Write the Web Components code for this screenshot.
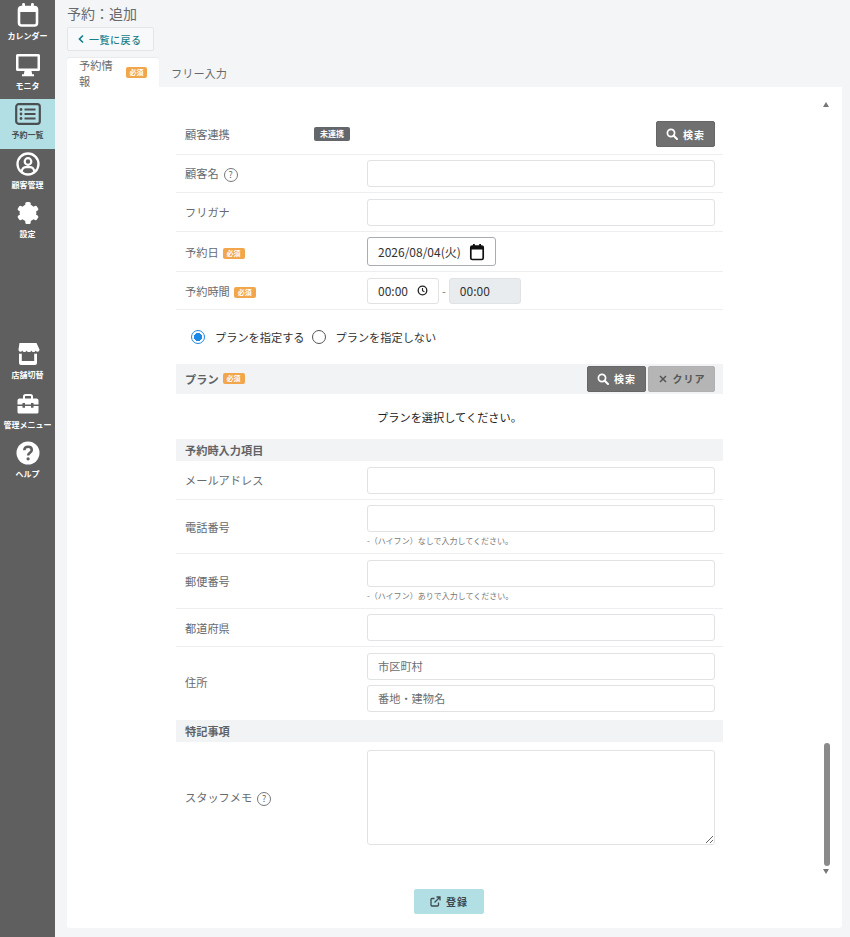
<!DOCTYPE html>
<html lang="ja">
<head>
<meta charset="utf-8">
<title>予約：追加</title>
<style>
    html, body {
        margin: 0;
        height: 937px;
        overflow: hidden;
        background: #f4f5f7;
        font-family: "Noto Sans CJK JP", "Noto Sans", sans-serif;
    }
</style>
</head>
<body>
<booking-app></booking-app>

<script>
const FONT = `"Noto Sans CJK JP", "Noto Sans", sans-serif`;
const INK = '#666a6e';

const ICONS = {
    calendar: `<svg width="24" height="26" viewBox="0 0 24 26"><rect x="3" y="5" width="18" height="18.5" rx="2.5" fill="none" stroke="currentColor" stroke-width="2.6"/><rect x="3" y="5" width="18" height="5" fill="currentColor"/><rect x="6.2" y="1" width="2.8" height="6" rx="1.2" fill="currentColor"/><rect x="15" y="1" width="2.8" height="6" rx="1.2" fill="currentColor"/></svg>`,
    monitor: `<svg width="26" height="24" viewBox="0 0 26 24"><path fill="currentColor" fill-rule="evenodd" d="M2.5 1h21A1.5 1.5 0 0 1 25 2.500v14a1.500 1.500 0 0 1-1.500 1.500h-21A1.500 1.500 0 0 1 1 16.500v-14A1.500 1.500 0 0 1 2.500 1zM3.500 3.500v12h19v-12z"/><path fill="currentColor" d="M9.500 18h7l.7 3.200H19v2H7v-2h1.800z"/></svg>`,
    list: `<svg width="26" height="24" viewBox="0 0 26 24"><rect x="1.200" y="2.200" width="23.600" height="19.600" rx="2.500" fill="none" stroke="currentColor" stroke-width="2.200"/><circle cx="6" cy="7.500" r="1.400" fill="currentColor"/><circle cx="6" cy="12" r="1.400" fill="currentColor"/><circle cx="6" cy="16.500" r="1.400" fill="currentColor"/><path d="M9.500 7.500h11M9.500 12h11M9.500 16.500h11" stroke="currentColor" stroke-width="2"/></svg>`,
    person: `<svg width="24" height="24" viewBox="0 0 24 24"><circle cx="12" cy="12" r="10.500" fill="none" stroke="currentColor" stroke-width="2.300"/><circle cx="12" cy="9.500" r="3.300" fill="none" stroke="currentColor" stroke-width="2.200"/><path d="M5.500 19.500c.8-3 3-4.300 4.500-4.300h4c1.500 0 3.700 1.300 4.500 4.300" fill="none" stroke="currentColor" stroke-width="2.200"/></svg>`,
    gear: `<svg width="24" height="24" viewBox="0 0 24 24"><g fill="currentColor"><rect x="9.300" y="1" width="5.400" height="22" rx="1.500"/><rect x="9.300" y="1" width="5.400" height="22" rx="1.500" transform="rotate(60 12 12)"/><rect x="9.300" y="1" width="5.400" height="22" rx="1.500" transform="rotate(120 12 12)"/></g><circle cx="12" cy="12" r="6.300" fill="none" stroke="currentColor" stroke-width="4.200"/></svg>`,
    store: `<svg width="24" height="24" viewBox="0 0 24 24"><path fill="currentColor" d="M3.500 1h17l3 6.500c0 2.500-2.900 3-3.800 1-.9 2-3.400 2-4.300 0-.8 2-4 2-4.800 0-.9 2-3.400 2-4.300 0-.9 2-3.800 1.500-3.800-1z"/><path fill="currentColor" fill-rule="evenodd" d="M3 11.500c1 .4 2 .4 2.800 0V19h12.400v-7.500c.8.4 1.800.4 2.800 0V21a2 2 0 0 1-2 2H5a2 2 0 0 1-2-2z"/></svg>`,
    toolbox: `<svg width="24" height="24" viewBox="0 0 24 24"><path fill="none" stroke="currentColor" stroke-width="2" d="M8 7V4.500A1.500 1.500 0 0 1 9.500 3h5A1.500 1.500 0 0 1 16 4.500V7"/><path fill="currentColor" d="M3.500 6.500h17A2 2 0 0 1 22.500 8.500V12.500h-5v-1.500h-2.500v1.500h-6v-1.500H6.500v1.500h-5V8.500a2 2 0 0 1 2-2z"/><path fill="currentColor" d="M1.500 14h5v1.800H9V14h6v1.800h2.500V14h5v6a1.500 1.500 0 0 1-1.500 1.500H3A1.500 1.500 0 0 1 1.500 20z"/></svg>`,
    help: `<svg width="24" height="24" viewBox="0 0 24 24"><circle cx="12" cy="12" r="11.500" fill="currentColor"/><path d="M8.300 9.300c0-2.300 1.700-3.500 3.800-3.500s3.700 1.200 3.700 3.200c0 2.800-3.700 2.700-3.700 5.500" fill="none" stroke="#5f5f5f" stroke-width="2.500"/><circle cx="12.100" cy="17.800" r="1.600" fill="#5f5f5f"/></svg>`,
    search: `<svg width="12" height="12" viewBox="0 0 12 12"><circle cx="5" cy="5" r="3.600" fill="none" stroke="currentColor" stroke-width="1.700"/><path d="M7.700 7.700l3.300 3.300" stroke="currentColor" stroke-width="2" stroke-linecap="round"/></svg>`,
    cross: `<svg width="10" height="10" viewBox="0 0 10 10"><path d="M2 2l6 6M8 2l-6 6" stroke="currentColor" stroke-width="1.500"/></svg>`,
    external: `<svg width="11" height="11" viewBox="0 0 11 11"><path d="M8.500 6.500V9a1 1 0 0 1-1 1H2a1 1 0 0 1-1-1V3.500a1 1 0 0 1 1-1h2.500" fill="none" stroke="currentColor" stroke-width="1.300"/><path d="M4.500 6.500L9.500 1.500M6.500 1h3.500v3.500" fill="none" stroke="currentColor" stroke-width="1.300"/></svg>`,
    chevron: `<svg width="8" height="10" viewBox="0 0 8 10"><polyline points="6,1.500 2.500,5 6,8.500" fill="none" stroke="currentColor" stroke-width="1.700"/></svg>`,
    smallCal: `<svg width="16" height="18" viewBox="0 0 16 18"><rect x="1.800" y="3" width="12.400" height="13.500" rx="1.500" fill="none" stroke="#111" stroke-width="1.700"/><rect x="1.800" y="3" width="12.400" height="3.500" fill="#111"/><rect x="4" y="1" width="1.800" height="3" fill="#111"/><rect x="10.200" y="1" width="1.800" height="3" fill="#111"/></svg>`,
    clock: `<svg width="11" height="11" viewBox="0 0 11 11"><circle cx="5.500" cy="5.500" r="4.300" fill="none" stroke="#222" stroke-width="1.300"/><path d="M5.500 3v2.700l1.900 1" fill="none" stroke="#222" stroke-width="1.100"/></svg>`
};

class NavItem extends HTMLElement {
    constructor() {
        super();
        this.attachShadow({mode: 'open'});
    }

    connectedCallback() {
        this.shadowRoot.innerHTML = `
            <style>
                :host {
                    display: flex;
                    flex-direction: column;
                    align-items: center;
                    height: 49.5px;
                    padding-top: 3px;
                    box-sizing: border-box;
                    color: #fff;
                    cursor: pointer;
                }
                :host([active]) {
                    background: #b2dfe4;
                    color: #4a4f52;
                }
                .icon {
                    height: 24px;
                    display: flex;
                    align-items: center;
                    justify-content: center;
                }
                .label {
                    margin-top: 3px;
                    font-size: 8px;
                    line-height: 12px;
                    font-weight: 700;
                    white-space: nowrap;
                }
            </style>
            <span class="icon">${ICONS[this.getAttribute('icon')]}</span>
            <span class="label"><slot></slot></span>
        `;
    }
}
customElements.define('nav-item', NavItem);

class SideBar extends HTMLElement {
    constructor() {
        super();
        this.attachShadow({mode: 'open'});
    }

    connectedCallback() {
        this.shadowRoot.innerHTML = `
            <style>
                :host {
                    display: block;
                    flex: 0 0 55px;
                    width: 55px;
                    height: 937px;
                    background: #5f5f5f;
                    font-family: ${FONT};
                }
                .lower {
                    margin-top: 91.5px;
                }
            </style>
            <nav>
                <nav-item icon="calendar">カレンダー</nav-item>
                <nav-item icon="monitor">モニタ</nav-item>
                <nav-item icon="list" active>予約一覧</nav-item>
                <nav-item icon="person">顧客管理</nav-item>
                <nav-item icon="gear">設定</nav-item>
            </nav>
            <nav class="lower">
                <nav-item icon="store">店舗切替</nav-item>
                <nav-item icon="toolbox">管理メニュー</nav-item>
                <nav-item icon="help">ヘルプ</nav-item>
            </nav>
        `;
    }
}
customElements.define('side-bar', SideBar);

class ReqBadge extends HTMLElement {
    constructor() {
        super();
        this.attachShadow({mode: 'open'});
        this.shadowRoot.innerHTML = `
            <style>
                :host {
                    display: inline-block;
                    width: 22px;
                    height: 11px;
                    margin-left: 4px;
                    border-radius: 2px;
                    background: #f2a64c;
                    color: #fff;
                    font-size: 7px;
                    font-weight: 700;
                    line-height: 11px;
                    text-align: center;
                    vertical-align: 1px;
                }
            </style>
            必須
        `;
    }
}
customElements.define('req-badge', ReqBadge);

class HelpMark extends HTMLElement {
    constructor() {
        super();
        this.attachShadow({mode: 'open'});
        this.shadowRoot.innerHTML = `
            <style>
                :host {
                    display: inline-block;
                    width: 12px;
                    height: 12px;
                    margin-left: 5px;
                    border: 1px solid #777;
                    border-radius: 50%;
                    color: #666;
                    font-size: 9px;
                    line-height: 12px;
                    text-align: center;
                    vertical-align: 0;
                }
            </style>
            ?
        `;
    }
}
customElements.define('help-mark', HelpMark);

class ActButton extends HTMLElement {
    constructor() {
        super();
        this.attachShadow({mode: 'open'});
    }

    connectedCallback() {
        const icon = this.getAttribute('icon');
        this.shadowRoot.innerHTML = `
            <style>
                :host {
                    display: inline-flex;
                    align-items: center;
                    justify-content: center;
                    gap: 5px;
                    box-sizing: border-box;
                    height: 26px;
                    border-radius: 2px;
                    border: 1px solid #666;
                    background: #707070;
                    color: #fff;
                    font-size: 10px;
                    font-weight: 700;
                    letter-spacing: 1px;
                    cursor: pointer;
                }
                :host([variant="light"]) {
                    background: #b5b5b5;
                    border-color: #b0b0b0;
                    color: #555;
                }
                :host([variant="accent"]) {
                    background: #b2dfe4;
                    border-color: #b2dfe4;
                    color: #3d4a50;
                }
                svg {
                    display: block;
                }
            </style>
            ${ICONS[icon]}<slot></slot>
        `;
    }
}
customElements.define('act-button', ActButton);

class TextField extends HTMLElement {
    constructor() {
        super();
        this.attachShadow({mode: 'open'});
        this.shadowRoot.innerHTML = `
            <style>
                :host {
                    display: flex;
                    align-items: center;
                    box-sizing: border-box;
                    height: 27px;
                    padding: 0 10px;
                    background: #fff;
                    border: 1px solid #e0e2e4;
                    border-radius: 3px;
                    color: #6b6f73;
                    font-size: 11.2px;
                }
                :host([strong]) {
                    height: 29px;
                    border-color: #a9adb1;
                    color: #333;
                    font-size: 12px;
                    justify-content: space-between;
                }
                :host([time]) {
                    height: 26px;
                    color: #333;
                    font-size: 12px;
                    justify-content: space-between;
                }
                :host([disabled]) {
                    background: #e9ecef;
                }
            </style>
            <slot></slot>
        `;
    }
}
customElements.define('text-field', TextField);

class FormRow extends HTMLElement {
    constructor() {
        super();
        this.attachShadow({mode: 'open'});
        this.shadowRoot.innerHTML = `
            <style>
                :host {
                    display: flex;
                    align-items: center;
                    box-sizing: border-box;
                    padding: 5.500px 8px 5px 9px;
                    border-bottom: 1px solid #eceeef;
                }
                :host([plain]) {
                    border-bottom: 0;
                }
                .label {
                    flex: 0 0 182px;
                    color: ${INK};
                    font-size: 11.200px;
                    white-space: nowrap;
                }
                .field {
                    flex: 1;
                    min-width: 0;
                    display: flex;
                    flex-direction: column;
                }
            </style>
            <div class="label"><slot name="label"></slot></div>
            <div class="field"><slot></slot></div>
        `;
    }
}
customElements.define('form-row', FormRow);

class SectionHead extends HTMLElement {
    constructor() {
        super();
        this.attachShadow({mode: 'open'});
        this.shadowRoot.innerHTML = `
            <style>
                :host {
                    display: flex;
                    align-items: center;
                    box-sizing: border-box;
                    min-height: 22.500px;
                    padding: 0 8px 0 9px;
                    background: #f1f3f4;
                    color: #5f6367;
                    font-size: 11.200px;
                    font-weight: 700;
                }
                .tools {
                    margin-left: auto;
                    display: flex;
                    gap: 2px;
                }
            </style>
            <slot></slot>
            <div class="tools"><slot name="tools"></slot></div>
        `;
    }
}
customElements.define('section-head', SectionHead);

class TabBar extends HTMLElement {
    constructor() {
        super();
        this.attachShadow({mode: 'open'});
        this.shadowRoot.innerHTML = `
            <style>
                :host {
                    display: flex;
                    height: 29px;
                    margin-top: 7px;
                    color: ${INK};
                    font-size: 11.200px;
                }
                .tab {
                    display: flex;
                    align-items: center;
                    padding: 0 12px;
                }
                .tab.on {
                    width: 92px;
                    box-sizing: border-box;
                    background: #fff;
                    border-radius: 3px 3px 0 0;
                    box-shadow: 0 -1px 1px #e9ebed;
                }
            </style>
            <div class="tab on">予約情報<req-badge></req-badge></div>
            <div class="tab">フリー入力</div>
        `;
    }
}
customElements.define('tab-bar', TabBar);

class FakeScroll extends HTMLElement {
    constructor() {
        super();
        this.attachShadow({mode: 'open'});
        this.shadowRoot.innerHTML = `
            <style>
                :host {
                    position: absolute;
                    top: 15px;
                    right: 12px;
                    width: 7px;
                    height: 772px;
                }
                .up, .down {
                    position: absolute;
                    left: 0;
                    width: 0;
                    height: 0;
                    border-left: 3.500px solid transparent;
                    border-right: 3.500px solid transparent;
                }
                .up {
                    top: 0;
                    border-bottom: 5px solid #777;
                }
                .down {
                    bottom: 0;
                    border-top: 5px solid #777;
                }
                .thumb {
                    position: absolute;
                    left: .500px;
                    bottom: 8px;
                    width: 6px;
                    height: 123px;
                    border-radius: 3px;
                    background: #8a8a8a;
                }
            </style>
            <div class="up"></div>
            <div class="thumb"></div>
            <div class="down"></div>
        `;
    }
}
customElements.define('fake-scroll', FakeScroll);

class RadioOption extends HTMLElement {
    constructor() {
        super();
        this.attachShadow({mode: 'open'});
        this.shadowRoot.innerHTML = `
            <style>
                :host {
                    display: inline-flex;
                    align-items: center;
                    gap: 10px;
                    color: #333;
                    font-size: 11.200px;
                    cursor: pointer;
                }
                .ring {
                    box-sizing: border-box;
                    width: 14px;
                    height: 14px;
                    border: 1px solid #555;
                    border-radius: 50%;
                }
                :host([checked]) .ring {
                    border: 1.500px solid #1e88e5;
                    background: radial-gradient(circle, #1e88e5 0 3.800px, #fff 4.300px);
                }
            </style>
            <span class="ring"></span>
            <slot></slot>
        `;
    }
}
customElements.define('radio-option', RadioOption);

class BookingForm extends HTMLElement {
    constructor() {
        super();
        this.attachShadow({mode: 'open'});
    }

    connectedCallback() {
        this.shadowRoot.innerHTML = `
            <style>
                :host {
                    display: block;
                    width: 547px;
                    margin-left: 109px;
                    padding-top: 28px;
                }
                .link-row {
                    display: flex;
                    align-items: center;
                    box-sizing: border-box;
                    height: 39.500px;
                    padding: 0 8px 0 9px;
                    border-bottom: 1px solid #eceeef;
                    color: ${INK};
                    font-size: 11.200px;
                }
                .link-row .name {
                    flex: 0 0 129px;
                }
                .pill {
                    box-sizing: border-box;
                    width: 36px;
                    height: 14px;
                    border-radius: 2px;
                    background: #63676b;
                    color: #fff;
                    font-size: 8px;
                    font-weight: 700;
                    line-height: 14px;
                    text-align: center;
                }
                .link-row act-button {
                    width: 59px;
                    margin-left: auto;
                }
                .date {
                    width: 129px;
                }
                .times {
                    display: flex;
                    align-items: center;
                    gap: 3px;
                    color: #777;
                    font-size: 11px;
                }
                .times text-field {
                    width: 72px;
                }
                .radios {
                    display: flex;
                    gap: 7px;
                    height: 54px;
                    padding-left: 15px;
                    align-items: center;
                }
                .plan {
                    height: 30px;
                }
                .plan act-button:first-of-type {
                    width: 59px;
                }
                .plan act-button[variant="light"] {
                    width: 67px;
                }
                .empty {
                    height: 45px;
                    line-height: 46px;
                    text-align: center;
                    color: #222;
                    font-size: 11.200px;
                }
                .hint {
                    margin-top: 3px;
                    color: #777;
                    font-size: 8px;
                    line-height: 12px;
                    height: 13px;
                }
                .stack {
                    gap: 5px;
                    display: flex;
                    flex-direction: column;
                }
                textarea {
                    display: block;
                    box-sizing: border-box;
                    width: 100%;
                    height: 95px;
                    border: 1px solid #e0e2e4;
                    border-radius: 3px;
                    resize: vertical;
                }
                .memo {
                    padding-top: 8px;
                    padding-bottom: 0;
                    border-bottom: 0;
                }
                .submit {
                    display: flex;
                    justify-content: center;
                    margin-top: 44px;
                    padding-right: 1px;
                }
                .submit act-button {
                    width: 70px;
                    height: 25px;
                }
            </style>
            <div class="link-row">
                <span class="name">顧客連携</span>
                <span class="pill">未連携</span>
                <act-button icon="search">検索</act-button>
            </div>
            <form-row><span slot="label">顧客名<help-mark></help-mark></span><text-field></text-field></form-row>
            <form-row><span slot="label">フリガナ</span><text-field></text-field></form-row>
            <form-row><span slot="label">予約日<req-badge></req-badge></span>
                <text-field strong class="date">2026/08/04(火)${ICONS.smallCal}</text-field>
            </form-row>
            <form-row><span slot="label">予約時間<req-badge></req-badge></span>
                <div class="times">
                    <text-field time>00:00${ICONS.clock}</text-field>
                    <span>-</span>
                    <text-field time disabled>00:00</text-field>
                </div>
            </form-row>
            <div class="radios">
                <radio-option checked>プランを指定する</radio-option>
                <radio-option>プランを指定しない</radio-option>
            </div>
            <section-head class="plan">プラン<req-badge></req-badge>
                <act-button slot="tools" icon="search">検索</act-button>
                <act-button slot="tools" icon="cross" variant="light">クリア</act-button>
            </section-head>
            <div class="empty">プランを選択してください。</div>
            <section-head>予約時入力項目</section-head>
            <form-row><span slot="label">メールアドレス</span><text-field></text-field></form-row>
            <form-row><span slot="label">電話番号</span>
                <text-field></text-field>
                <div class="hint">-（ハイフン）なしで入力してください。</div>
            </form-row>
            <form-row><span slot="label">郵便番号</span>
                <text-field></text-field>
                <div class="hint">-（ハイフン）ありで入力してください。</div>
            </form-row>
            <form-row><span slot="label">都道府県</span><text-field></text-field></form-row>
            <form-row plain><span slot="label">住所</span>
                <div class="stack">
                    <text-field>市区町村</text-field>
                    <text-field>番地・建物名</text-field>
                </div>
            </form-row>
            <section-head style="margin-top:3px">特記事項</section-head>
            <form-row plain class="memo"><span slot="label">スタッフメモ<help-mark></help-mark></span>
                <textarea></textarea>
            </form-row>
            <div class="submit"><act-button icon="external" variant="accent">登録</act-button></div>
        `;
    }
}
customElements.define('booking-form', BookingForm);

class BookingApp extends HTMLElement {
    constructor() {
        super();
        this.attachShadow({mode: 'open'});
    }

    connectedCallback() {
        this.shadowRoot.innerHTML = `
            <style>
                :host {
                    display: flex;
                    height: 937px;
                    overflow: hidden;
                    font-family: ${FONT};
                }
                main {
                    flex: 1;
                    min-width: 0;
                    padding: 0 8px 0 12px;
                }
                h1 {
                    margin: 0;
                    height: 27px;
                    color: ${INK};
                    font-size: 14px;
                    font-weight: 400;
                    line-height: 27px;
                }
                .back {
                    display: flex;
                    align-items: center;
                    gap: 4px;
                    box-sizing: border-box;
                    width: 87px;
                    height: 24px;
                    padding-left: 9px;
                    background: #f8f9fa;
                    border: 1px solid #e3e5e7;
                    border-radius: 2px;
                    color: #17808c;
                    font-size: 10px;
                    font-weight: 500;
                    letter-spacing: .500px;
                }
                .panel {
                    position: relative;
                    height: 841px;
                    background: #fff;
                    border-radius: 0 0 3px 3px;
                    overflow: hidden;
                }
            </style>
            <side-bar></side-bar>
            <main>
                <h1>予約：追加</h1>
                <div class="back">${ICONS.chevron}<span>一覧に戻る</span></div>
                <tab-bar></tab-bar>
                <div class="panel">
                    <booking-form></booking-form>
                    <fake-scroll></fake-scroll>
                </div>
            </main>
        `;
    }
}
customElements.define('booking-app', BookingApp);
</script>
</body>
</html>
